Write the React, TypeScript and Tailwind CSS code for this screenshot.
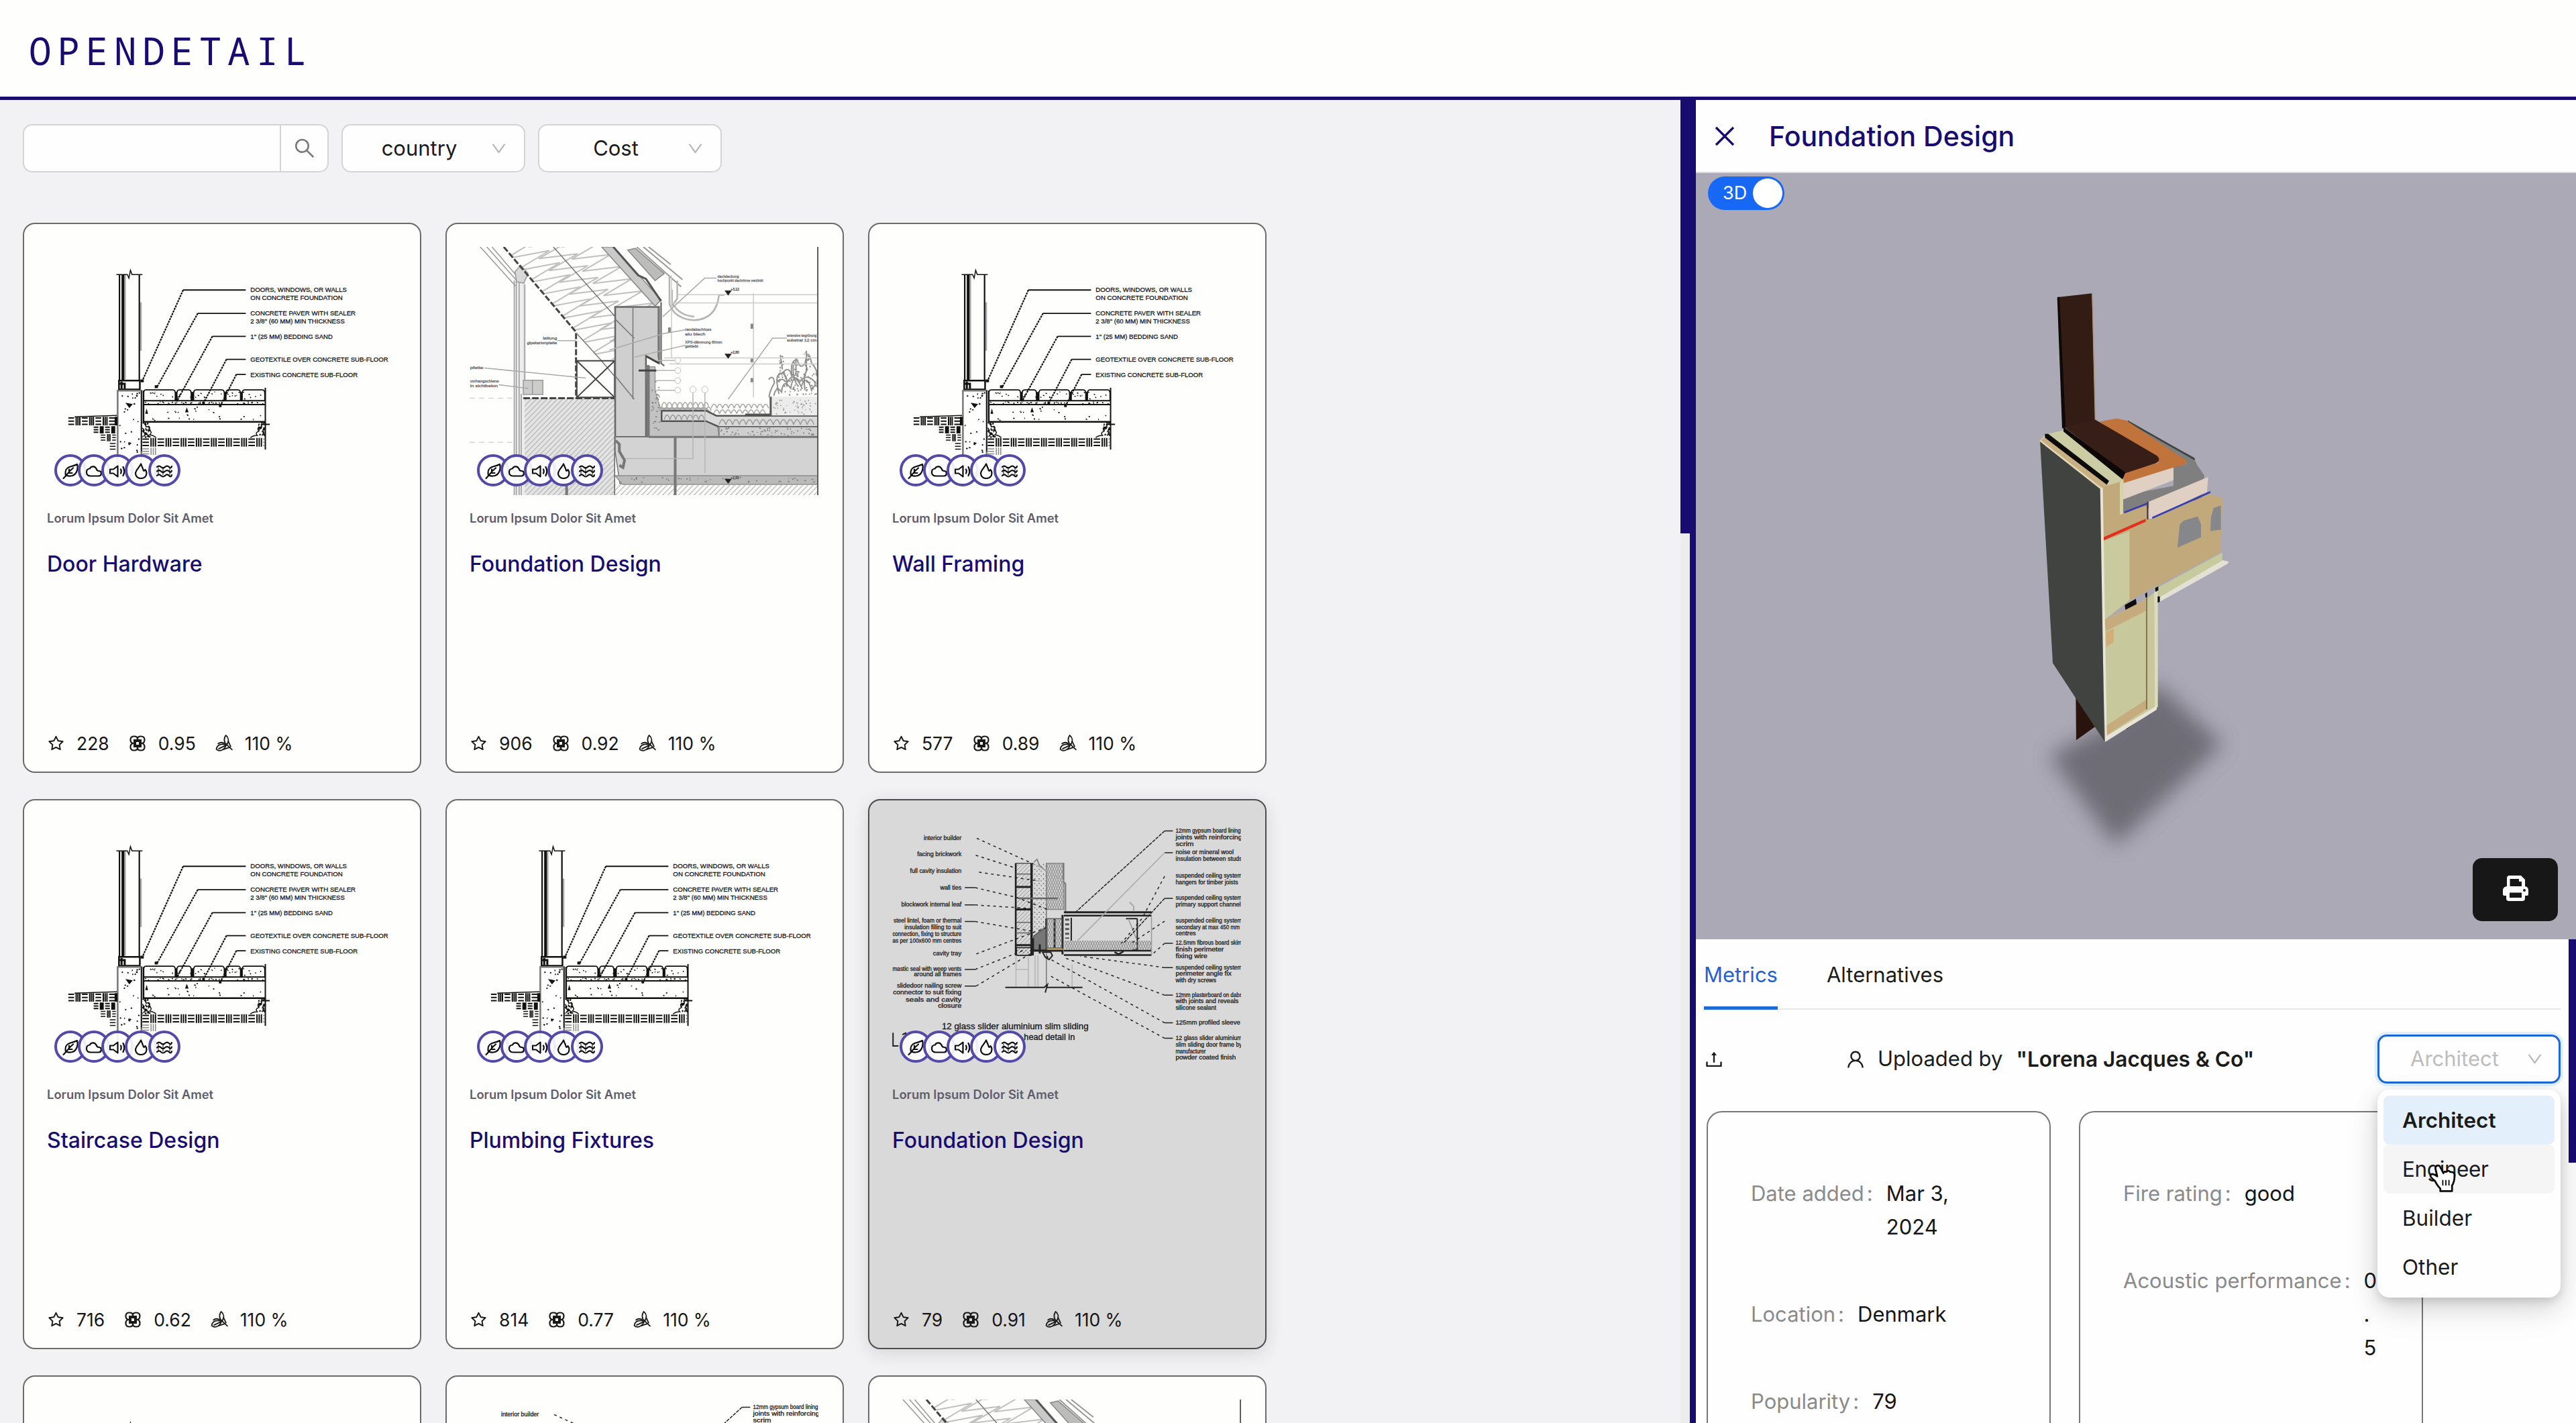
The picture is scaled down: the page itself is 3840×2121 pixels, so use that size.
import React from "react";
import { AiOutlineStar, AiOutlineSearch, AiOutlineClose, AiOutlineDown, AiOutlineUser, AiOutlineUpload } from "react-icons/ai";

/* ---------- helpers shared by the drawings ---------- */

// Deterministic scatter of short strokes inside a box, used for concrete and gravel.
function scatter(x: number, y: number, w: number, h: number, n: number, seed: number) {
  let s = seed;
  const next = () => {
    s = (s * 16807) % 2147483647;
    return s / 2147483647;
  };
  next();
  let d = "";
  for (let i = 0; i < n; i++) {
    d += `M${(x + next() * w).toFixed(1)} ${(y + next() * h).toFixed(1)}l${(2 + next() * 4).toFixed(1)} ${(next() * 3).toFixed(1)}`;
  }
  return d;
}

// Earth hatch: cells that alternate between level and upright strokes.
function earth(x: number, y: number, w: number, h: number, cell: number) {
  let d = "";
  let level = true;
  for (let cx = x; cx < x + w - 4; cx += cell) {
    const cw = Math.min(cell, x + w - cx) - 4;
    for (let k = 0; k < 3; k++) {
      d += level
        ? `M${cx} ${y + 3 + (k * (h - 6)) / 2}h${cw}`
        : `M${cx + 4 + (k * (cw - 8)) / 2} ${y}v${h}`;
    }
    level = !level;
  }
  return d;
}

// Row of small arches, used for gravel and insulation beds.
function arches(x: number, y: number, w: number, r: number, h: number) {
  let d = "";
  for (let cx = x; cx + r * 2 <= x + w; cx += r * 2) d += `M${cx} ${y}q${r} ${-h} ${r * 2} 0`;
  return d;
}

// Soft insulation line that swings between two parallel edges.
function swing(x0: number, y0: number, x1: number, y1: number, ox: number, oy: number, n: number) {
  let d = `M${x0} ${y0}`;
  for (let i = 1; i <= n; i++) {
    const t = i / n;
    const side = i % 2;
    d += `L${(x0 + (x1 - x0) * t + ox * side).toFixed(1)} ${(y0 + (y1 - y0) * t + oy * side).toFixed(1)}`;
  }
  return d;
}

type LabelProps = { x: number; y: number; w: number; size: number; sx: number; anchor?: "start" | "end"; fill?: string; children: string };

function Label({ x, y, w, size, sx, anchor = "start", fill = "#111", children }: LabelProps) {
  return (
    <text
      transform={`translate(${x} ${y}) scale(${sx} 1)`}
      fontSize={size}
      textAnchor={anchor}
      textLength={w / sx}
      lengthAdjust="spacingAndGlyphs"
      fill={fill}
      stroke={fill}
      strokeWidth="0.5"
      fontFamily="Liberation Sans, sans-serif"
    >
      {children}
    </text>
  );
}

/* ---------- card drawings ---------- */

const drawingClass = "block h-[370px] w-[520px] [&_path]:[vector-effect:non-scaling-stroke] [&_rect]:[vector-effect:non-scaling-stroke]";

const paverLabels: [number, number, string][] = [
  [197, 369, "DOORS, WINDOWS, OR WALLS"],
  [219, 353, "ON CONCRETE FOUNDATION"],
  [261, 403, "CONCRETE PAVER WITH SEALER"],
  [283, 361, '2 3/8" (60 MM) MIN THICKNESS'],
  [326, 315, '1" (25 MM) BEDDING SAND'],
  [390, 528, "GEOTEXTILE OVER CONCRETE SUB-FLOOR"],
  [433, 411, "EXISTING CONCRETE SUB-FLOOR"],
];

function PaverDrawing() {
  return (
    <svg viewBox="104 71 1337 691" preserveAspectRatio="none" className={drawingClass} fill="none" stroke="#111" strokeWidth="1.5">
      <path d="M403 148V440M464 225V360" stroke="#a5a5a5" strokeWidth="2.5" />
      <path d="M382 148V443M458 148V443" strokeWidth="2.2" />
      <path d="M395 148V443" strokeWidth="4" />
      <path d="M370 148H412L418 158L424 136L430 148H470" />
      <rect x="380" y="443" width="80" height="25" strokeWidth="2.5" />
      <path d="M382 452h20v14M390 446v20" strokeWidth="3" />
      <rect x="375" y="471" width="91" height="220" stroke="#777" strokeWidth="2.5" fill="#fefefe" />
      <path d="M466 471V640" />
      <path d={scatter(380, 476, 80, 165, 28, 70007)} strokeWidth="2" />
      <path d="M412 508l8 8l7 -6zM446 484l5 3" strokeWidth="2.5" />
      {[[474, 122], [602, 55], [666, 118], [790, 56], [852, 87]].map(([x, w]) => (
        <path key={x} d={`M${x} 498V480Q${x} 469 ${x + 9} 469H${x + w - 9}Q${x + w} 469 ${x + w} 480V498`} strokeWidth="1.8" />
      ))}
      <path d="M599 475V498M661 475V498M787 475V498M849 475V498" strokeWidth="3" />
      <path d={scatter(478, 474, 455, 20, 34, 310031)} />
      <path d="M474 499H940M474 510H940" strokeWidth="2" />
      <path d="M474 558H940" strokeWidth="2.5" />
      <path d={scatter(478, 502, 458, 5, 34, 130013)} strokeWidth="1.5" />
      <path d={scatter(478, 514, 458, 40, 22, 39003)} strokeWidth="1.8" />
      <path d="M640 522l-4 8h8zM486 526l-3 8h6z" fill="#111" />
      <path d="M474 471V560" strokeWidth="2.5" />
      <path d="M941 463V635M930 565H958" strokeWidth="2" />
      <path d="M470 560q12 4 14 12q18 -4 12 10q14 4 2 12q16 2 24 8M470 575q10 6 4 14M476 596q14 -8 20 4" />
      <path d="M940 560q-14 4 -14 12q-20 0 -10 12q-16 4 -6 12q-16 0 -26 6M938 575q-10 4 -4 14" />
      <path d={scatter(470, 560, 26, 40, 26, 17017) + scatter(912, 560, 26, 40, 26, 23023)} strokeWidth="2.5" />
      <path d={earth(470, 603, 470, 24, 29)} strokeWidth="2" />
      <path d={earth(470, 630, 60, 20, 29)} stroke="#888" />
      <path d={earth(186, 544, 188, 24, 26) + earth(283, 570, 90, 20, 22)} strokeWidth="2" />
      <path d={earth(310, 592, 62, 20, 22) + earth(345, 615, 28, 22, 26)} strokeWidth="1.5" />
      <path d="M210 544L372 540" />
      <path d="M866 191H626M866 256H682M866 320H738M866 384H792M866 426H830" strokeWidth="1.8" />
      <path d="M626 191L470 443M682 256L525 462M738 320L604 498M792 384L704 506M830 426L768 514" strokeWidth="2.2" strokeDasharray="3 1.2" />
      <path d="M463 440h12v8h-12zM517 456h12v8h-12zM598 494h10v7h-10zM699 502h10v7h-10zM763 510h10v7h-10z" fill="#111" stroke="none" />
      <g>
        {paverLabels.map(([y, w, t]) => (
          <Label key={y} x={884} y={y} w={w} size={18} sx={1.377}>{t}</Label>
        ))}
      </g>
    </svg>
  );
}

function RoofDrawing() {
  return (
    <svg viewBox="104 71 1337 691" preserveAspectRatio="none" className={drawingClass} fill="none" stroke="#777" strokeWidth="1.5">
      <defs>
        <pattern id="hatch" width="20" height="15" patternUnits="userSpaceOnUse">
          <path d="M0 15L20 0M-5 3.750L5 -3.750M15 18.750L25 11.250" stroke="#b2b2b2" strokeWidth="1.2" />
        </pattern>
        <clipPath id="roofClip"><path d="M104 71H1441V762H104Z" /></clipPath>
        <clipPath id="rafterClip"><path d="M235 71L512 308L600 385L662 385V240L815 236L615 71Z" /></clipPath>
      </defs>
      <g clipPath="url(#roofClip)">
        <g clipPath="url(#rafterClip)" stroke="#c0c0c0" strokeWidth="2">
          <path d={swing(200, 71, 640, 440, 150, -40, 22)} />
          <path d={swing(330, 71, 720, 400, 130, -30, 20)} />
          <path d={swing(455, 71, 860, 410, 130, -30, 20)} />
        </g>
        <path d="M300 492H660V762H300Z" fill="#e4e4e4" stroke="none" />
        <path d="M300 492H660V762H300Z" fill="url(#hatch)" stroke="none" />
        <path d="M275 160H315V762H275Z" fill="#eee" stroke="none" />
        <path d="M275 165V762M283 165V762M294 165V762M302 480V762" stroke="#999" />
        <path d="M315 175V480" stroke="#b0b0b0" strokeWidth="2.5" />
        <path d="M145 71L280 180M170 71L285 165M190 71L300 165" stroke="#999" />
        <path d="M278 140L300 122L328 145L312 172L284 168Z" fill="#d8d8d8" stroke="#999" />
        <path d="M235 71L512 308V492" stroke="#444" strokeWidth="3" strokeDasharray="9 3" />
        <path d="M425 71L735 325M512 310L600 380L735 495" stroke="#777" />
        <path d="M310 492H660" stroke="#444" strokeWidth="3" strokeDasharray="10 3" />
        <path d="M515 388H660V490H515ZL660 490M660 388L515 490" stroke="#444" strokeWidth="2" />
        <path d="M310 442H385V482H310ZM345 442V482" fill="#ccc" stroke="#999" />
        {/* parapet block and slab */}
        <path d="M662 238H830V395L780 375V600H662Z" fill="#cfcfcf" stroke="#666" strokeWidth="2.5" />
        <path d="M730 240V495M662 272L735 325M662 430L735 495" stroke="#777" />
        <path d="M662 600H1441V730H680L662 640Z" fill="#d3d3d3" stroke="#777" />
        <path d="M662 708H1441V732H690Z" fill="#bababa" stroke="#8f8f8f" />
        <path d="M662 732H1441V762H662Z" fill="url(#hatch)" stroke="none" />
        <path d="M660 600V762" stroke="#666" />
        <path d="M664 610l14 10v20l20 25l-6 20l-14 -6" stroke="#777" strokeWidth="4" />
        <path d="M892 575V762M476 735V762" stroke="#777" strokeWidth="4" />
        {/* upper roof edge */}
        <path d="M655 71L838 218L815 236L610 71Z" fill="#c9c9c9" stroke="#888" />
        <path d="M655 71L750 150L780 160L838 222" stroke="#555" strokeWidth="3" />
        <path d="M710 80L740 75L850 145L815 165Z" fill="#bcbcbc" stroke="#888" />
        <path d="M745 71L915 182M770 71L920 162M790 71L875 120" stroke="#999" strokeWidth="2" />
        <path d="M870 150V230Q890 272 965 275Q1050 272 1060 205H1080M880 190V225Q905 262 965 265M900 165V215L875 240" stroke="#b5b5b5" strokeWidth="2.5" />
        <path d="M838 225V395L850 402M828 240V380" stroke="#777" strokeWidth="2.5" />
        <path d="M782 405H815V470L835 520H1010L1050 545L1060 600H790Z" fill="#c2c2c2" stroke="#999" />
        <path d="M788 400V600" stroke="#777" strokeWidth="5" />
        <path d="M780 375L830 395M752 415H820" stroke="#444" strokeWidth="3" />
        {/* gravel, membranes, insulation */}
        <path d={arches(840, 515, 180, 10, 22) + arches(830, 527, 200, 10, 20) + arches(1030, 520, 220, 11, 22) + arches(1040, 535, 215, 11, 20)} stroke="#a5a5a5" />
        <path d="M840 527H1010L1050 541H1441V572H1060L1010 556H840Z" fill="#dadada" stroke="#555" strokeWidth="2.5" />
        <path d={arches(850, 552, 165, 11, 26) + arches(1060, 566, 380, 13, 28)} stroke="#999" />
        <path d="M1060 572H1441V600H1060Z" fill="#cfcfcf" stroke="#777" />
        <path d={scatter(1060, 574, 375, 22, 60, 50505) + scatter(800, 440, 30, 150, 34, 90909)} stroke="#777" />
        <path d="M790 600H1441" stroke="#777" strokeWidth="3" />
        <path d={scatter(690, 712, 750, 14, 40, 191919)} stroke="#777" />
        {/* planter */}
        <path d="M1258 488H1441V540H1258Z" fill="#ececec" stroke="none" />
        <path d="M1258 488V538H1160" stroke="#555" strokeWidth="3" />
        <path d={scatter(1265, 492, 170, 44, 46, 292929)} stroke="#999" />
        <path d="M1270 485q10 -30 30 -10q5 -40 35 -10q10 -50 40 -5q20 -40 40 10q10 -20 26 -8M1290 480q-20 -60 10 -55q30 -30 40 10q-10 -50 20 -50q10 30 30 10q10 -50 25 0q30 20 20 60M1295 372l8 40M1355 380v50M1395 360v60M1280 450q20 -20 40 0q20 -30 50 -5q30 -25 60 5M1300 420q25 10 20 40M1345 400q-5 40 20 60M1400 410q-20 20 -10 60M1250 440q20 -15 22 10q-20 25 -20 40" stroke="#929292" strokeWidth="2" />
        <path d={scatter(1280, 420, 155, 64, 90, 414141) + scatter(1288, 370, 18, 50, 12, 7171) + scatter(1385, 360, 22, 60, 16, 8181) + scatter(1345, 380, 20, 50, 12, 9191)} stroke="#8a8a8a" strokeWidth="2" />
        {/* dimension lines, leaders, levels */}
        <path d="M900 204H1441M870 227H1441M850 380H1441M870 397H1441M1192 200V490M878 150V380" stroke="#ccc" />
        <path d="M845 265L1005 158H1050M640 358L850 312L930 302M735 378L930 345M1095 495L1265 325H1320M160 408L550 436M440 332H512M216 455L330 465" stroke="#aaa" />
        <path d="M104 492H275M104 615H275" stroke="#d5d5d5" strokeDasharray="8 6" />
        <path d="M960 470V660H700M1006 470V700M820 387H890M820 415H890M820 443H890M820 470H890" stroke="#b5b5b5" />
        {[387, 415, 443, 470].map((y) => <ellipse key={y} cx="902" cy={y} rx="11" ry="8" stroke="#aaa" fill="#fff" />)}
        <ellipse cx="960" cy="468" rx="12" ry="9" stroke="#aaa" fill="#fff" />
        <ellipse cx="1006" cy="468" rx="12" ry="9" stroke="#aaa" fill="#fff" />
        <path d="M1085 194h20l-10 10zM1085 370h20l-10 10zM1085 718h20l-10 10z" fill="#222" stroke="#222" />
        <path d="M1186 285v14M1186 382v10M1186 436v12M870 295v14" stroke="#888" strokeWidth="4" />
        <g>
          <Label x={1054} y={157} w={82} size={11} sx={1.377} fill="#666">dachdeckung</Label>
          <Label x={1054} y={169} w={175} size={11} sx={1.377} fill="#666">hochpunkt dachrinne verzinkt</Label>
          <Label x={1105} y={192} w={32} size={10} sx={1.377} fill="#444">+3,12</Label>
          <Label x={1105} y={368} w={32} size={10} sx={1.377} fill="#444">+2,80</Label>
          <Label x={1105} y={717} w={32} size={10} sx={1.377} fill="#444">+2,50</Label>
          <Label x={930} y={304} w={100} size={11} sx={1.377} fill="#666">randabschluss</Label>
          <Label x={930} y={317} w={78} size={11} sx={1.377} fill="#666">alu blech</Label>
          <Label x={930} y={339} w={142} size={11} sx={1.377} fill="#666">XPS-dämmung 80mm</Label>
          <Label x={930} y={352} w={50} size={11} sx={1.377} fill="#666">geklebt</Label>
          <Label x={385} y={328} w={54} size={11} sx={1.377} fill="#666">lattung</Label>
          <Label x={324} y={341} w={115} size={11} sx={1.377} fill="#666">gipskartonplatte</Label>
          <Label x={106} y={410} w={50} size={11} sx={1.377} fill="#666">pfette</Label>
          <Label x={106} y={449} w={110} size={11} sx={1.377} fill="#666">vorhangschiene</Label>
          <Label x={106} y={462} w={106} size={11} sx={1.377} fill="#666">in sichtbeton</Label>
          <Label x={1320} y={322} w={114} size={11} sx={1.377} fill="#666">extensive begrünung</Label>
          <Label x={1320} y={334} w={114} size={11} sx={1.377} fill="#666">substrat 12 cm</Label>
        </g>
        <path d="M1440 71V762" stroke="#555" strokeWidth="3" />
      </g>
    </svg>
  );
}

const headLeft: [number, number, string][] = [
  [132, 138, "interior builder"], [176, 162, "facing brickwork"], [220, 188, "full cavity insulation"], [266, 78, "wall ties"],
  [312, 220, "blockwork internal leaf"], [356, 248, "steel lintel, foam or thermal"], [374, 208, "insulation filling to suit"],
  [392, 252, "connection, fixing to structure"], [411, 252, "as per 100x600 mm centres"], [445, 104, "cavity tray"],
  [487, 252, "mastic seal with weep vents"], [502, 174, "around all frames"], [532, 236, "slidedoor nailing screw"],
  [551, 250, "connector to suit fixing"], [570, 204, "seals and cavity"], [587, 86, "closure"],
];

const headRight: [number, number, string][] = [
  [111, 238, "12mm gypsum board lining"], [130, 243, "joints with reinforcing"], [148, 66, "scrim"],
  [170, 212, "noise or mineral wool"], [188, 243, "insulation between studs"], [233, 243, "suspended ceiling system"],
  [251, 228, "hangers for timber joists"], [294, 243, "suspended ceiling system"], [312, 238, "primary support channel"],
  [356, 243, "suspended ceiling system"], [374, 234, "secondary at max 450 mm"], [391, 74, "centres"],
  [416, 243, "12.5mm fibrous board skim"], [434, 176, "finish perimeter"], [453, 116, "fixing wire"],
  [483, 243, "suspended ceiling system"], [499, 204, "perimeter angle fix"], [517, 148, "with dry screws"],
  [558, 243, "12mm plasterboard on dabs"], [574, 230, "with joints and reveals"], [593, 148, "silicone sealant"],
  [632, 236, "125mm profiled sleeve"], [674, 243, "12 glass slider aluminium"], [692, 243, "slim sliding door frame by"],
  [710, 110, "manufacturer"], [728, 220, "powder coated finish"],
];

function HeadDrawing() {
  return (
    <svg viewBox="123 86 1274 674" preserveAspectRatio="none" className={drawingClass} fill="none" stroke="#222" strokeWidth="1.5">
      <defs>
        <pattern id="brick" width="30" height="22" patternUnits="userSpaceOnUse">
          <path d="M0 22L30 0M0 11L15 0M15 22L30 11" stroke="#777" strokeWidth="0.8" />
        </pattern>
        <pattern id="mesh" width="18" height="15" patternUnits="userSpaceOnUse">
          <path d="M0 15L9 0L18 15M0 0L9 15L18 0" stroke="#777" strokeWidth="0.8" fill="none" />
        </pattern>
        <pattern id="speck" width="16" height="13" patternUnits="userSpaceOnUse">
          <path d="M2 3h3M10 8h3" stroke="#444" strokeWidth="1.4" />
        </pattern>
      </defs>
      <path d="M575 195H630V445H575Z" fill="url(#brick)" stroke="#555" />
      <path d="M574 195V445" strokeWidth="2.5" />
      <path d="M575 224H630M575 355H630M575 384H630" stroke="#666" strokeWidth="1.5" />
      <path d="M575 259H630M575 320H630M575 417H630" strokeWidth="3" />
      <path d="M632 195V400" strokeWidth="3.5" />
      <path d="M634 195H684V370L640 395H634Z" fill="url(#speck)" stroke="none" />
      <path d="M640 192L652 184L660 200L684 215M686 195V530" stroke="#777" />
      <path d="M686 195H750V320H686Z" fill="url(#mesh)" stroke="#888" />
      <path d="M748 195V245L756 250V325" stroke="#777" strokeWidth="2" />
      <path d="M686 345V430M716 345V425M745 335V442" strokeWidth="3" />
      <path d="M688 345H742V425H688Z" fill="url(#mesh)" stroke="#666" />
      <path d="M640 392L684 368V430H640Z" fill="#777" stroke="#555" />
      <path d="M634 398V445" strokeWidth="5" />
      <path d="M577 424H630V445H577Z" fill="url(#speck)" />
      <path d="M640 432H745M662 415V440" strokeWidth="3" />
      <path d="M688 428H748" stroke="#b59b52" strokeWidth="2" />
      <path d="M672 436l10 14l14 6l12 -10l-6 -10zM690 446V455" strokeWidth="2" />
      <path d="M585 290H728" strokeWidth="2.5" stroke="#666" />
      {/* floor joists and ceiling */}
      <path d="M750 328H1070" strokeWidth="3" />
      <path d="M750 337H1070M750 432H1070M750 444H1070" strokeWidth="2.500" />
      <path d="M777 343V405M1018 345V430H1000M977 345H1018" strokeWidth="2" />
      <path d="M762 345V400" strokeWidth="6" strokeDasharray="3 4" stroke="#555" />
      <path d="M752 405H1070V430H752Z" fill="url(#mesh)" stroke="none" />
      <path d="M985 345L1015 400M1070 340V445M990 300L1005 312V325" stroke="#999" />
      <path d="M935 436L950 442L968 434" strokeWidth="2.5" />
      <path d="M575 445V530M620 450V530M645 445V530M655 445V530M780 470V530M575 483H618" stroke="#b5b5b5" />
      <path d="M536 532H678L690 524L682 546M688 532H818" strokeWidth="2" />
      {/* leaders */}
      <path d="M388 261H426M388 308H426M388 353H426M388 483H426M388 528H430M1118 107H1148M1118 166H1148M1118 290H1148M1118 412H1148M1118 478H1148M1118 553H1148M1118 628H1148M1118 670H1148" strokeWidth="1.5" />
      <path d="M432 127L640 197M428 173L575 208M440 219L660 243M426 261L575 287L690 320M426 308L640 318M426 353L640 380M430 441L684 370M426 483L600 432M430 528L640 435M1118 230L1035 345L960 412M1118 352L1000 410M1118 412L1070 444M1118 478L810 447M1118 553L755 452M1118 628L700 455M1118 670L694 498" strokeWidth="1.500" strokeDasharray="4 5" />
      <path d="M1118 107L795 326M1118 290L970 410" strokeWidth="1.5" strokeDasharray="5 1.5" />
      <path d="M1118 166L800 405M650 200L752 243" stroke="#aaa" />
      <g>
        {headLeft.map(([y, w, t]) => <Label key={y} x={376} y={y} w={w} size={15} sx={1.344} anchor="end" fill="#1c1c1c">{t}</Label>)}
        {headRight.map(([y, w, t]) => <Label key={y} x={1158} y={y} w={w} size={15} sx={1.344} fill="#1c1c1c">{t}</Label>)}
        <Label x={304} y={646} w={536} size={23} sx={1.344}>12 glass slider aluminium slim sliding</Label>
        <Label x={604} y={675} w={186} size={23} sx={1.344}>head detail in</Label>
      </g>
      <path d="M126 655V691H146M160 660l12 -4v14" strokeWidth="2" />
    </svg>
  );
}

/* ---------- badge icons ---------- */

function Badge({ children }: { children: React.ReactNode }) {
  return (
    <div className="-mr-[13px] flex size-12 items-center justify-center rounded-full border-4 border-[#524aa6] bg-white/90 text-[#0c0c0c]">
      <svg viewBox="0 0 24 24" className="mt-[1px] size-[24px] shrink-0" fill="none" stroke="currentColor" strokeWidth="2.2" strokeLinecap="round" strokeLinejoin="round">
        {children}
      </svg>
    </div>
  );
}

function Badges() {
  return (
    <div className="absolute top-[309px] left-[11px] flex">
      <Badge>
        <path d="M1.500 23C6 19 8 14 16 7.500M5 18.500C3.500 12 6 7 12 5.500C16 4.500 18 4 22 2C24 9 21 19 12 19.500C9 19.700 7 19 5 18.500M10 13.500V9.500M9 15H14.500" />
      </Badge>
      <Badge>
        <path d="M7 19.500C3 19.500 1 17 1 14C1 10 3.500 8.500 6 8.500C7 5 13 3.500 15.500 8.500C16.500 11 17 12 20 12C24 12.500 24 19.500 19 19.500Z" />
      </Badge>
      <Badge>
        <path d="M1 9.500V15.500H6L12.500 20.500V4.500L6 9.500Z" />
        <path d="M17 9.500Q18.500 12.500 17 15.500M20.500 6Q24 12.500 20.500 19" />
      </Badge>
      <Badge>
        <path d="M12 1.500C10.500 6 4.500 10 4 15.500C4 20 7.500 23 12 23C17 23 20.500 20 20.500 15C20.500 12.500 19.500 11 18.500 10C18 11.500 17 12 16 11.500C15 8 13.500 5 12 1.500Z" />
      </Badge>
      <Badge>
        <path d="M1 6Q4 3 7 6T13 6T19 6T23 5M1 12.500Q4 9.500 7 12.500T13 12.500T19 12.500T23 11.500M1 19Q4 16 7 19T13 19T19 19T23 18" />
        <path d="M3 7V18M10 7V18M20 7V18" strokeWidth="1" />
      </Badge>
    </div>
  );
}

function FlowerIcon() {
  return (
    <svg viewBox="0 0 24 24" className="size-[24px]" fill="none" stroke="#1a1a1a" strokeWidth="2.2">
      <path d="M12 5.500C12 3 10 1.500 7 1.500C3 1.500 1.500 3 1.500 6.500C1.500 10 3 12 6 12C3 12 1.500 14 1.500 17.500C1.500 21 3 22.500 7 22.500C10 22.500 12 21 12 18.500C12 21 14 22.500 17 22.500C21 22.500 22.500 21 22.500 17.500C22.500 14 21 12 18 12C21 12 22.500 10 22.500 6.500C22.500 3 21 1.500 17 1.500C14 1.500 12 3 12 5.500" />
      <rect x="8" y="8" width="8" height="8" strokeWidth="4" />
      <path d="M5 12H8M16 12H19M12 16V19M12 5V8" />
    </svg>
  );
}

function SproutIcon() {
  return (
    <svg viewBox="0 0 26 25" className="h-[26px] w-[27px]" fill="none" stroke="#1a1a1a" strokeWidth="1.8" strokeLinecap="round" strokeLinejoin="round">
      <path d="M15 1C19 4 20 9 16.500 14.500C12 11.500 12 5 15 1Z" />
      <path d="M1.500 21C2 15 9 12 15.500 15C13.500 22 6 25 1.500 21ZM5 20L15 15.500" />
      <path d="M4 13C7 10.500 11 11 13 13M16.500 14.500L24 21.500M18.500 9.500L22 17M12 21L20 18.500" />
    </svg>
  );
}

/* ---------- gallery ---------- */

type CardInfo = { title: string; stars: string; score: string };
type CardData = { info?: CardInfo; drawing: "paver" | "roof" | "head"; active?: boolean };

const cards: CardData[] = [
  { info: { title: "Door Hardware", stars: "228", score: "0.95" }, drawing: "paver" },
  { info: { title: "Foundation Design", stars: "906", score: "0.92" }, drawing: "roof" },
  { info: { title: "Wall Framing", stars: "577", score: "0.89" }, drawing: "paver" },
  { info: { title: "Staircase Design", stars: "716", score: "0.62" }, drawing: "paver" },
  { info: { title: "Plumbing Fixtures", stars: "814", score: "0.77" }, drawing: "paver" },
  { info: { title: "Foundation Design", stars: "79", score: "0.91" }, drawing: "head", active: true },
  { drawing: "paver" },
  { drawing: "head" },
  { drawing: "roof" },
];

function Card({ card }: { card: CardData }) {
  return (
    <article
      className={
        card.active
          ? "flex h-[820px] w-[594px] flex-col rounded-[18px] border-2 border-[#4d4d4d] bg-[#d9d9d9] px-[34px] pt-[34px] pb-[22px] shadow-[0_6px_28px_rgba(0,0,0,0.12)]"
          : "flex h-[820px] w-[594px] flex-col rounded-[18px] border-2 border-[#6b6b6b] bg-[#fefefd] px-[34px] pt-[34px] pb-[22px]"
      }
    >
      <div className="relative">
        {card.drawing === "paver" && <PaverDrawing />}
        {card.drawing === "roof" && <RoofDrawing />}
        {card.drawing === "head" && <HeadDrawing />}
        <Badges />
      </div>
      {card.info && (
        <>
          <p className="mt-[19px] text-[18.4px] leading-[30px] font-semibold text-[#5f5d6c]">Lorum Ipsum Dolor Sit Amet</p>
          <h3 className="mt-[32px] text-[32px] leading-[44px] font-medium text-[#180c70]">{card.info.title}</h3>
          <div className="mt-auto flex items-center text-[26.500px] leading-[40px] text-[#161616]">
            <AiOutlineStar className="size-[27px]" />
            <span className="ml-[17px]">{card.info.stars}</span>
            <span className="ml-[30px]"><FlowerIcon /></span>
            <span className="ml-[19px]">{card.info.score}</span>
            <span className="ml-[29px]"><SproutIcon /></span>
            <span className="ml-[17px]">110 %</span>
          </div>
        </>
      )}
    </article>
  );
}

function FilterSelect({ label }: { label: string }) {
  return (
    <div className="relative flex h-[72px] w-[274px] items-center justify-center rounded-[14px] border-2 border-[#d4d4d5] bg-[#fefefe] pr-[42px] text-[31px] text-[#1b1b1b]">
      {label}
      <AiOutlineDown className="absolute right-[24px] size-[27px] text-[#b4b4b4]" />
    </div>
  );
}

function Gallery() {
  return (
    <section className="h-full w-[2505px] shrink-0 overflow-hidden bg-[#f2f2f4] pt-[36px] pl-[34px]">
      <div className="flex gap-[19px]">
        <div className="flex h-[72px] w-[456px] rounded-[14px] border-2 border-[#d4d4d5] bg-[#fefefe]">
          <div className="flex-1" />
          <div className="flex w-[71px] items-center justify-center border-l-2 border-[#d4d4d5] text-[#7a7a7a]">
            <AiOutlineSearch className="size-[36px]" />
          </div>
        </div>
        <FilterSelect label="country" />
        <FilterSelect label="Cost" />
      </div>
      <div className="mt-[75px] grid grid-cols-[repeat(3,594px)] gap-x-9 gap-y-[39px]">
        {cards.map((c, i) => <Card key={i} card={c} />)}
      </div>
    </section>
  );
}

/* ---------- detail panel ---------- */

function Model() {
  return (
    <svg viewBox="0 0 1200 1568" preserveAspectRatio="none" className="absolute top-[142px] left-[452px] h-[900px] w-[400px] overflow-visible">
      <defs>
        <filter id="soft" x="-30%" y="-40%" width="160%" height="180%"><feGaussianBlur stdDeviation="46 27" /></filter>
      </defs>
      <path d="M225 1265L470 1190L700 1075L1000 1235L520 1500Z" fill="#696771" opacity=".92" filter="url(#soft)" />
      <path d="M343 1110L430 1190L345 1225Z" fill="#2a130c" />
      <path d="M570 1197L705 1142V1130L560 1180Z" fill="#2a1a12" />
      <path d="M262 75L415 65L430 395L290 415Z" fill="#331c14" />
      <path d="M260 75L270 74L298 412L282 416Z" fill="#0d0a08" />
      <path d="M415 65L420 66L434 392L428 394Z" fill="#b39a86" />
      {/* layered floor build-up */}
      <path d="M560 395L870 490L885 510L918 538L905 600L555 632L550 590L780 565V515L840 508Z" fill="#7f7f7f" />
      <path d="M575 397L875 496" stroke="#3e4440" strokeWidth="5" />
      <path d="M450 398L525 390L570 395L840 500L835 508L560 558L550 530L715 505Z" fill="#c0733a" />
      <path d="M290 412L430 393L705 486Q728 498 700 506L565 532Z" fill="#371e16" />
      <path d="M555 558L780 517V550L555 600Z" fill="#e0d0c4" />
      <path d="M183 447L205 432L290 420L555 540L553 637L455 580Z" fill="#cccda4" />
      <path d="M205 430L220 430L492 552L480 563L205 440Z" fill="#0b0b0a" />
      <path d="M288 412L565 530L552 548L288 424Z" fill="#0b0807" />
      <path d="M183 447L205 440L485 563L550 553L460 572Z" fill="#c9b083" />
      {/* cut face */}
      <path d="M455 570L548 553V637L660 615V650H690L945 585L1000 598L990 738L585 862L470 915Z" fill="#c2a97b" />
      <path d="M540 556L555 548V637L540 640Z" fill="#d8d3a6" />
      <path d="M555 600L780 565L905 535V580L660 612L555 636Z" fill="#7f7f7f" />
      <path d="M670 606L935 542L930 580L680 650H670Z" fill="#e0d0c4" />
      <path d="M664 606V652" stroke="#4d3423" strokeWidth="6" />
      <path d="M560 634L662 611M685 648L945 581" stroke="#383eab" strokeWidth="5" />
      <path d="M468 702L656 654" stroke="#e2301d" strokeWidth="8" />
      <path d="M466 708L583 682V862L470 914Z" fill="#c9cb9e" />
      <path d="M798 725L808 665L825 655L888 644L903 665V698Z" fill="#86878b" />
      <path d="M945 682L948 645L960 622L992 616V678Z" fill="#86878b" />
      <path d="M712 828L998 738V762L715 858Z" fill="#c7ca9c" />
      <path d="M712 856L1000 758L1028 762L1020 768L718 866Z" fill="#e3e1d4" />
      {/* lower wall */}
      <path d="M470 914L660 858L710 835L705 1140L480 1218Z" fill="#c7c99d" />
      <path d="M470 914L655 860V890L478 942Z" fill="#c5ab7d" />
      <path d="M478 1188L658 1120V1145L482 1212Z" fill="#c5ab7d" />
      <path d="M660 845V1145" stroke="#8d704c" strokeWidth="6" />
      <path d="M694 840L710 835V1140H697Z" fill="#dcdcbc" />
      <path d="M478 945L512 935V970L478 985Z" fill="#d3ad78" />
      <path d="M470 950V985" stroke="#555" strokeWidth="5" />
      <path d="M562 874L612 858L615 872L565 887ZM698 830L712 826V836L700 840ZM653 845L662 841V853L655 855ZM709 852H719V866L709 868Z" fill="#0d0d0d" />
      {/* cladding */}
      <path d="M445 566L464 570L482 1214L705 1136V1146L474 1230Z" fill="#e8e4d6" />
      <path d="M183 447L452 570L471 1228L345 1118L240 1025Z" fill="#40433f" />
      <path d="M183 447L452 570" stroke="#e3d8b8" strokeWidth="5" />
    </svg>
  );
}

function PrintIcon() {
  return (
    <svg viewBox="0 0 38 38" className="size-[38px]">
      <path fill="#fff" fillRule="evenodd" d="M6 4Q6 0 10 0H27L33 6V16Q38 17 38 22V28Q38 30 36 30H33V34Q33 38 29 38H9Q5 38 5 34V30H2Q0 30 0 28V22Q0 17 6 16ZM10.500 5V16H28V9H24V5ZM10 25.500V33H28V25.500ZM32 20A2 2 0 1 0 32 24A2 2 0 1 0 32 20Z" />
    </svg>
  );
}

function Row({ label, children }: { label: string; children: React.ReactNode }) {
  return (
    <div className="flex items-start">
      <span className="whitespace-nowrap text-[#8a8a8b]">{label}<span className="ml-[4px]">:</span></span>
      <span className="ml-[20px] min-w-0 text-[#161616]">{children}</span>
    </div>
  );
}

const options = ["Architect", "Engineer", "Builder", "Other"];

function RoleSelect() {
  return (
    <div className="relative z-10 ml-auto h-[73px] w-[273px]">
      <div className="flex h-full items-center rounded-[14px] border-[3px] border-[#1b67d8] bg-[#fefefe] pr-[22px] pl-[46px] text-[31px] text-[#bdbdbd] shadow-[0_0_0_4px_rgba(22,119,255,0.12)]">
        Architect
        <AiOutlineDown className="ml-auto size-[27px] text-[#b5b5b5]" />
      </div>
      <ul className="absolute top-[82px] left-0 w-[273px] rounded-[18px] bg-[#fefefe] p-[9px] text-[31.500px] leading-[73px] text-[#1b1b1b] shadow-[0_14px_38px_rgba(0,0,0,0.14),0_5px_14px_rgba(0,0,0,0.12),0_20px_64px_rgba(0,0,0,0.05)]">
        {options.map((o, i) => (
          <li
            key={o}
            className={
              i === 0
                ? "rounded-[9px] bg-[#e3f0fc] pl-[28px] font-semibold"
                : i === 1
                  ? "rounded-[9px] bg-[#f5f5f5] pl-[28px] tracking-[-0.4px]"
                  : "pl-[28px]"
            }
          >
            {o}
          </li>
        ))}
      </ul>
      <svg viewBox="0 0 46 50" className="absolute top-[192px] left-[75px] h-[46px] w-[43px]" fill="#fff" stroke="#0a0a0a" strokeWidth="3" strokeLinejoin="round">
        <path d="M14 4Q18 2 20 6L25 16Q26 12 29 14Q34 10 36 14Q44 13 43 21Q43 30 39 36V45H20V41Q15 36 11 28Q3 22 4 19Q7 15 15 21L12 8Q12 5 14 4Z" />
        <path d="M24 27V36M29 27V36M34 27V36" strokeWidth="2" />
      </svg>
    </div>
  );
}

function Panel() {
  return (
    <aside className="flex h-full w-[1312px] flex-col bg-[#fefefe]">
      <header className="flex h-[109px] shrink-0 items-center border-b-2 border-[#d9d9de] text-[#180c70]">
        <AiOutlineClose className="ml-[22px] size-[42px]" />
        <h2 className="ml-[45px] text-[41px] leading-[50px] font-medium">Foundation Design</h2>
      </header>

      <div className="relative h-[1142px] shrink-0 bg-[#aba9b6]">
        <Model />
        <div className="absolute top-[5px] left-[18px] flex h-[50px] w-[114px] items-center rounded-full bg-[#1769f5] pl-[22px] text-[27px] text-white">
          3D
          <div className="absolute right-[3px] size-[44px] rounded-full bg-white" />
        </div>
        <button className="absolute top-[1021px] left-[1158px] flex h-[94px] w-[127px] items-center justify-center rounded-[14px] bg-[#171717] pb-[5px]">
          <PrintIcon />
        </button>
      </div>

      <div className="flex min-h-0 flex-1">
        <div className="flex w-[1301px] flex-col px-[12px]">
          <nav className="flex h-[105px] shrink-0 gap-[73px] border-b-2 border-[#e8e8ea] text-[31px] leading-[106px] text-[#1b1b1b]">
            <span className="-mb-[2px] h-[105px] border-b-[5px] border-[#1f6bd9] text-[#1f62d0]">Metrics</span>
            <span>Alternatives</span>
          </nav>

          <div className="mt-[37px] flex h-[73px] shrink-0 items-center text-[31px] text-[#1b1b1b]">
            <AiOutlineUpload className="-ml-[1px] size-[32px]" />
            <AiOutlineUser className="ml-[179px] size-[32px]" />
            <span className="ml-[17px]">Uploaded by</span>
            <span className="ml-[20px] text-[31.600px] font-semibold">"Lorena Jacques &amp; Co"</span>
            <RoleSelect />
          </div>

          <div className="mt-[41px] flex gap-[42px] pl-[4px] text-[31px] leading-[50px]">
            <div className="flex h-[600px] w-[513px] flex-col gap-[80px] rounded-[23px] border-2 border-[#77777a] pt-[96px] pr-[60px] pl-[64px]">
              <Row label="Date added"><span className="block w-[110px]">Mar 3, 2024</span></Row>
              <Row label="Location">Denmark</Row>
              <Row label="Popularity">79</Row>
            </div>
            <div className="flex h-[600px] w-[513px] flex-col gap-[80px] rounded-[23px] border-2 border-[#77777a] pt-[96px] pr-[40px] pl-[64px]">
              <Row label="Fire rating">good</Row>
              <Row label="Acoustic performance">
                <span className="flex w-[20px] flex-col"><span>0</span><span>.</span><span>5</span></span>
              </Row>
            </div>
          </div>
        </div>
        <div className="h-[333px] w-[11px] bg-[#180c70]" />
      </div>
    </aside>
  );
}

export default function App() {
  return (
    <div className="flex h-[2121px] w-[3840px] flex-col overflow-hidden bg-[#fefefd] font-['Inter','Liberation_Sans',sans-serif]">
      <header className="flex h-[149px] shrink-0 items-center border-b-[5px] border-[#180c70] pl-[43px]">
        <h1 className="mt-[6px] font-['Noto_Sans_Mono','DejaVu_Sans_Mono',monospace] text-[56px] leading-[70px] tracking-[8.7px] text-[#180c70]">
          OPENDETAIL
        </h1>
      </header>
      <main className="flex min-h-0 flex-1">
        <Gallery />
        <div className="h-full w-[14px] bg-[#ededee]">
          <div className="h-[646px] w-full bg-[#180c70]" />
        </div>
        <div className="h-full w-[9px] bg-[#180c70]" />
        <Panel />
      </main>
    </div>
  );
}
